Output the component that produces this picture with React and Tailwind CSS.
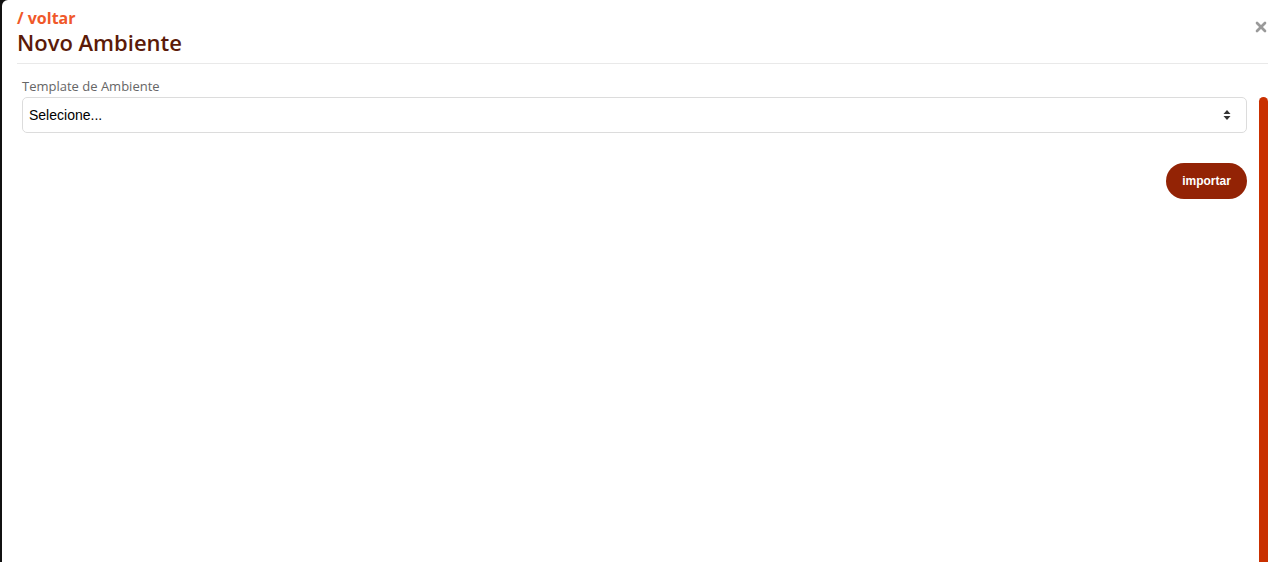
import { X } from "lucide-react";

export default function App() {
  return (
    <div className="h-[562px] w-full overflow-hidden bg-[#111]">
      <div className="ml-[2px] flex h-full flex-col overflow-hidden rounded-tl-[6px] bg-white font-['Open_Sans',sans-serif]">
        <div className="mx-[7px] ml-[15px] flex items-start justify-between border-b border-[#e9e9e9] pb-[6px] pt-[8px]">
          <div className="flex flex-col">
            <span className="text-[16px] font-bold leading-[20px] text-[#f0582a]">/ voltar</span>
            <h1 className="text-[22px] font-semibold leading-[29px] text-[#5b1a08]">Novo Ambiente</h1>
          </div>
          <button className="mr-[-1px] mt-[11px] text-[#9a9a9a]">
            <X size={16} strokeWidth={4} />
          </button>
        </div>
        <div className="flex flex-1">
          <div className="flex flex-1 flex-col pl-[20px] pr-[12px] pt-[15px]">
            <label className="mb-[3px] text-[13px] leading-[15px] text-[#666]">Template de Ambiente</label>
            <div className="flex h-[36px] items-center justify-between rounded-[5px] border border-[#dcdcdc] px-[6px] font-['Liberation_Sans',sans-serif] text-[14px] text-black">
              <span>Selecione...</span>
              <svg width="8" height="12" viewBox="0 0 8 12" className="mr-[9px]">
                <path d="M4 1 L7.5 5 H0.5 Z" fill="#333" />
                <path d="M4 11 L7.5 7 H0.5 Z" fill="#333" />
              </svg>
            </div>
            <div className="mt-[30px] flex justify-end">
              <button className="h-[36px] w-[81px] rounded-full bg-[#932305] font-['Liberation_Sans',sans-serif] text-[12px] font-bold text-white">
                importar
              </button>
            </div>
          </div>
          <div className="mr-[7px] mt-[33px] w-[9px] rounded-t-full bg-[#c93000]" />
        </div>
      </div>
    </div>
  );
}
